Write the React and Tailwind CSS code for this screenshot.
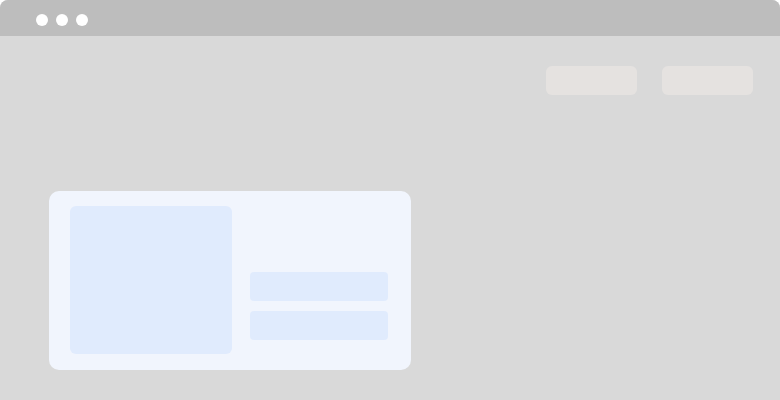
export default function App() {
  return (
    <div className="w-[780px] h-[400px] bg-[#d9d9d9] rounded-t-lg overflow-hidden flex flex-col">
      <div className="h-9 bg-[#bdbdbd] flex items-center pl-9 pt-1 gap-2 shrink-0">
        <div className="w-3 h-3 rounded-full bg-white" />
        <div className="w-3 h-3 rounded-full bg-white" />
        <div className="w-3 h-3 rounded-full bg-white" />
      </div>
      <div className="flex justify-end pr-[27px] gap-[25px] mt-[30px]">
        <div className="w-[91px] h-[29px] rounded-md bg-[#e5e2e0]" />
        <div className="w-[91px] h-[29px] rounded-md bg-[#e5e2e0]" />
      </div>
      <div className="ml-[49px] mt-[96px] w-[362px] h-[179px] rounded-[10px] bg-[#f1f5fd] flex pl-[21px] pt-[15px] pr-[23px] gap-[18px]">
        <div className="w-[162px] h-[148px] rounded-md bg-[#e0ebfd]" />
        <div className="flex-1 flex flex-col gap-[10px] pt-[66px]">
          <div className="h-[29px] rounded bg-[#e0ebfd]" />
          <div className="h-[29px] rounded bg-[#e0ebfd]" />
        </div>
      </div>
    </div>
  );
}
